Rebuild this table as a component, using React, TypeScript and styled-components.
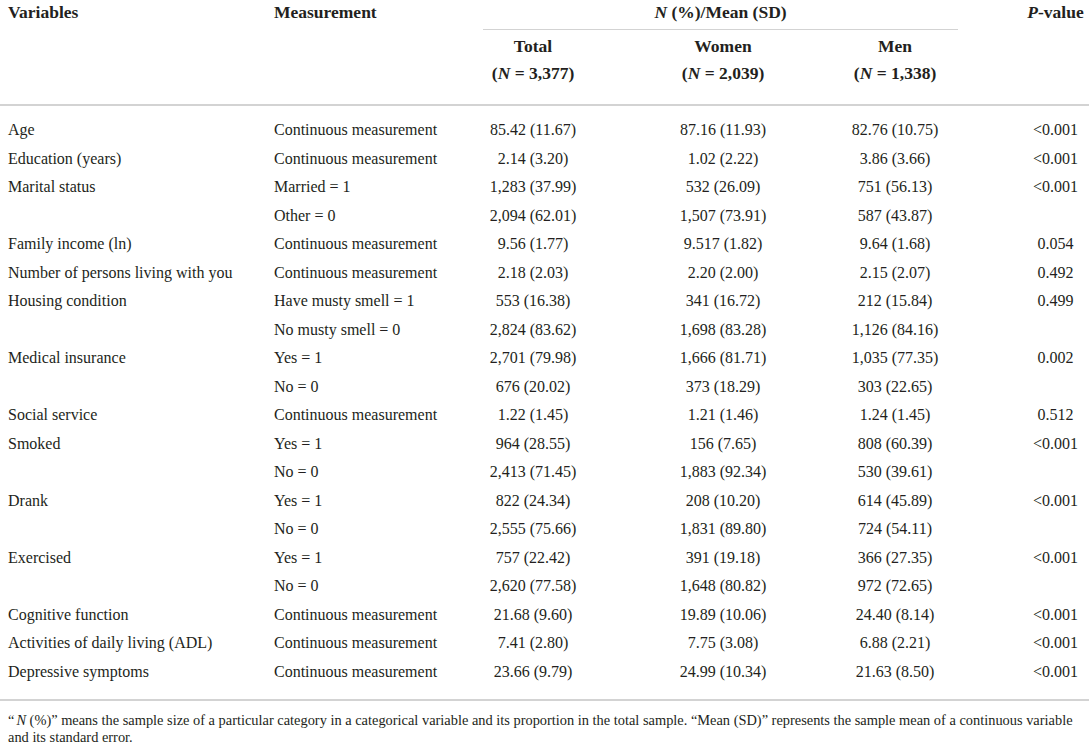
import React from "react";
import styled, { createGlobalStyle } from "styled-components";

type Row = {
  variable?: string;
  measure: string;
  total: string;
  women: string;
  men: string;
  p?: string;
};

const rows: Row[] = [
  { variable: "Age", measure: "Continuous measurement", total: "85.42 (11.67)", women: "87.16 (11.93)", men: "82.76 (10.75)", p: "<0.001" },
  { variable: "Education (years)", measure: "Continuous measurement", total: "2.14 (3.20)", women: "1.02 (2.22)", men: "3.86 (3.66)", p: "<0.001" },
  { variable: "Marital status", measure: "Married = 1", total: "1,283 (37.99)", women: "532 (26.09)", men: "751 (56.13)", p: "<0.001" },
  { measure: "Other = 0", total: "2,094 (62.01)", women: "1,507 (73.91)", men: "587 (43.87)" },
  { variable: "Family income (ln)", measure: "Continuous measurement", total: "9.56 (1.77)", women: "9.517 (1.82)", men: "9.64 (1.68)", p: "0.054" },
  { variable: "Number of persons living with you", measure: "Continuous measurement", total: "2.18 (2.03)", women: "2.20 (2.00)", men: "2.15 (2.07)", p: "0.492" },
  { variable: "Housing condition", measure: "Have musty smell = 1", total: "553 (16.38)", women: "341 (16.72)", men: "212 (15.84)", p: "0.499" },
  { measure: "No musty smell = 0", total: "2,824 (83.62)", women: "1,698 (83.28)", men: "1,126 (84.16)" },
  { variable: "Medical insurance", measure: "Yes = 1", total: "2,701 (79.98)", women: "1,666 (81.71)", men: "1,035 (77.35)", p: "0.002" },
  { measure: "No = 0", total: "676 (20.02)", women: "373 (18.29)", men: "303 (22.65)" },
  { variable: "Social service", measure: "Continuous measurement", total: "1.22 (1.45)", women: "1.21 (1.46)", men: "1.24 (1.45)", p: "0.512" },
  { variable: "Smoked", measure: "Yes = 1", total: "964 (28.55)", women: "156 (7.65)", men: "808 (60.39)", p: "<0.001" },
  { measure: "No = 0", total: "2,413 (71.45)", women: "1,883 (92.34)", men: "530 (39.61)" },
  { variable: "Drank", measure: "Yes = 1", total: "822 (24.34)", women: "208 (10.20)", men: "614 (45.89)", p: "<0.001" },
  { measure: "No = 0", total: "2,555 (75.66)", women: "1,831 (89.80)", men: "724 (54.11)" },
  { variable: "Exercised", measure: "Yes = 1", total: "757 (22.42)", women: "391 (19.18)", men: "366 (27.35)", p: "<0.001" },
  { measure: "No = 0", total: "2,620 (77.58)", women: "1,648 (80.82)", men: "972 (72.65)" },
  { variable: "Cognitive function", measure: "Continuous measurement", total: "21.68 (9.60)", women: "19.89 (10.06)", men: "24.40 (8.14)", p: "<0.001" },
  { variable: "Activities of daily living (ADL)", measure: "Continuous measurement", total: "7.41 (2.80)", women: "7.75 (3.08)", men: "6.88 (2.21)", p: "<0.001" },
  { variable: "Depressive symptoms", measure: "Continuous measurement", total: "23.66 (9.79)", women: "24.99 (10.34)", men: "21.63 (8.50)", p: "<0.001" },
];

const groups = [
  { label: "Total", n: "3,377" },
  { label: "Women", n: "2,039" },
  { label: "Men", n: "1,338" },
];

export default function App() {
  return (
    <>
      <GlobalStyle />
      <Page>
        <Header>
          <HeadLabel $col={1}>Variables</HeadLabel>
          <HeadLabel $col={2}>Measurement</HeadLabel>
          <GroupLabel>
            <i>N</i> (%)/Mean (SD)
          </GroupLabel>
          <HeadLabel $col={6} $pvalue>
            <i>P</i>-value
          </HeadLabel>
          {groups.map((g, i) => (
            <SubHead key={g.label} $col={i + 3}>
              {g.label}
              <br />(<i>N</i> = {g.n})
            </SubHead>
          ))}
        </Header>

        <Body>
          {rows.map((r, i) => (
            <DataRow key={i}>
              <Cell>{r.variable}</Cell>
              <Cell>{r.measure}</Cell>
              <Cell $center>{r.total}</Cell>
              <Cell $center>{r.women}</Cell>
              <Cell $center>{r.men}</Cell>
              <Cell $center $pvalue>{r.p}</Cell>
            </DataRow>
          ))}
        </Body>

        <Footnote>
          “<Em>N</Em> (%)” means the sample size of a particular category in a
          categorical variable and its proportion in the total sample. “Mean
          (SD)” represents the sample mean of a continuous variable and its
          standard error.
        </Footnote>
      </Page>
    </>
  );
}

const GlobalStyle = createGlobalStyle`
  body {
    margin: 0;
    background: #fff;
    color: #231f20;
    font-family: "Liberation Serif", "Times New Roman", serif;
  }
`;

// variables | measurement | total | women | men | p-value
const columns = "274px 174px 170px 210px 134px 1fr";

const Page = styled.div`
  width: 1089px;
`;

const Header = styled.div`
  display: grid;
  grid-template-columns: ${columns};
  grid-template-rows: auto auto;
  padding-bottom: 17px;
  border-bottom: 2px solid #d3d3d3;
`;

const HeadLabel = styled.div<{ $col: number; $pvalue?: boolean }>`
  grid-column: ${(p) => p.$col};
  grid-row: 1 / span 2;
  padding-left: ${(p) => (p.$pvalue ? "60px" : p.$col === 1 ? "8px" : "0")};
  text-align: ${(p) => (p.$pvalue ? "center" : "left")};
  font-size: 17.5px;
  font-weight: bold;
  line-height: 24px;
`;

const GroupLabel = styled.div`
  grid-column: 3 / span 3;
  grid-row: 1;
  margin: 0 4px 0 35px;
  padding-bottom: 5px;
  border-bottom: 1.5px solid #d3d3d3;
  text-align: center;
  font-size: 17.5px;
  font-weight: bold;
  line-height: 24px;
`;

const SubHead = styled.div<{ $col: number }>`
  grid-column: ${(p) => p.$col};
  grid-row: 2;
  padding-top: 3px;
  text-align: center;
  font-size: 17.5px;
  font-weight: bold;
  line-height: 27px;
`;

const Body = styled.div`
  padding: 10px 0 13px;
  border-bottom: 2px solid #d3d3d3;
`;

const DataRow = styled.div`
  display: grid;
  grid-template-columns: ${columns};
  height: 28.5px;
  align-items: center;
`;

const Cell = styled.div<{ $center?: boolean; $pvalue?: boolean }>`
  padding-left: ${(p) => (p.$pvalue ? "60px" : p.$center ? "0" : "8px")};
  text-align: ${(p) => (p.$center ? "center" : "left")};
  font-size: 16px;
  white-space: nowrap;

  &:nth-child(2) {
    padding-left: 0;
  }
`;

const Footnote = styled.p`
  margin: 0;
  padding: 11px 6px 0 8px;
  font-size: 14.4px;
  line-height: 17px;
`;

const Em = styled.i`
  margin-left: 2px;
`;
